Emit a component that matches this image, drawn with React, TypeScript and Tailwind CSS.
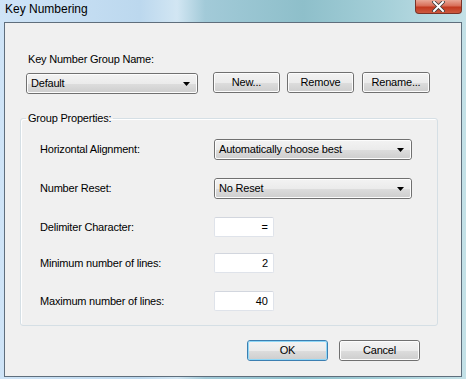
import React from "react";

const font = { fontFamily: '"Liberation Sans", Arial, sans-serif' };

function Btn({ children, w, def }: { children: React.ReactNode; w: string; def?: boolean }) {
  return (
    <div className={`${w} h-[21px] rounded-[3px] border ${def ? "border-[#3c7fb1]" : "border-[#707070]"}`}>
      <div
        className={`h-full w-full rounded-[2px] border ${def ? "border-[#8fd7f7]" : "border-[#fcfcfc]"} bg-[linear-gradient(180deg,#f2f2f2_0%,#ebebeb_50%,#dddddd_51%,#cfcfcf_100%)] flex items-center justify-center text-[11px] leading-[13px] tracking-[-0.2px] text-black`}
      >
        {children}
      </div>
    </div>
  );
}

function Combo({ value, w }: { value: string; w: string }) {
  return (
    <div className={`${w} h-[21px] rounded-[3px] border border-[#707070]`}>
      <div className="h-full w-full rounded-[2px] border border-[#fcfcfc] bg-[linear-gradient(180deg,#f2f2f2_0%,#ebebeb_50%,#dddddd_51%,#cfcfcf_100%)] flex items-center justify-between pl-[3px] pr-[6px] text-[11px] leading-[13px] tracking-[-0.2px] text-black">
        <span>{value}</span>
        <svg width="7" height="4" viewBox="0 0 7 4">
          <path d="M0 0 H7 L3.5 4 Z" fill="#000" />
        </svg>
      </div>
    </div>
  );
}

function TextBox({ value }: { value: string }) {
  return (
    <div className="w-[60px] h-[20px] rounded-[2px] border border-[#dfe3ea] border-t-[#d2d6de] bg-white flex items-center justify-end pr-[5px] text-[11px] leading-[13px] text-black">
      {value}
    </div>
  );
}

function Row({ label, mt, children }: { label: string; mt: string; children: React.ReactNode }) {
  return (
    <div className={`flex items-center ${mt}`}>
      <div className="w-[174px] text-[11px] leading-[13px] tracking-[-0.2px] text-black">{label}</div>
      {children}
    </div>
  );
}

export default function App() {
  return (
    <div
      style={font}
      className="w-[466px] h-[379px] overflow-hidden flex flex-col bg-[linear-gradient(90deg,#cfe4f7_0%,#bcd8ee_30%,#d2e6f3_38%,#a2cad8_44%,#8ebfca_65%,#a4cfd8_82%,#c4e1e7_100%)]"
    >
      {/* Title bar */}
      <div className="h-[22px] flex items-start justify-between pl-[5px] pr-[4px]">
        <div className="pt-[2px] text-[12px] leading-[14px] text-black">Key Numbering</div>
        <div className="w-[47px] h-[14px] rounded-b-[4px] border border-t-0 border-[#7a3328] bg-[linear-gradient(180deg,#e9a796_0%,#d86e58_45%,#c2391f_55%,#cc5a3f_100%)] flex items-center justify-center">
          <svg width="13" height="11" viewBox="0 0 13 11">
            <path d="M2 1 L11 10 M11 1 L2 10" stroke="#3a3a3a" strokeWidth="3.6" strokeLinecap="square" />
            <path d="M2 1 L11 10 M11 1 L2 10" stroke="#ffffff" strokeWidth="2" strokeLinecap="square" />
          </svg>
        </div>
      </div>

      {/* Client */}
      <div className="mx-[4px] h-[355px] border border-[#5f6e7c] bg-[#f0f0f0] flex flex-col">
        <div className="pl-[23px] pt-[30px] text-[11px] leading-[13px] tracking-[-0.2px] text-black">
          Key Number Group Name:
        </div>
        <div className="flex items-start pl-[21px] mt-[6px]">
          <div className="mt-[1px]">
            <Combo value="Default" w="w-[172px]" />
          </div>
          <div className="ml-[15px]">
            <Btn w="w-[67px]">New...</Btn>
          </div>
          <div className="ml-[7px]">
            <Btn w="w-[67px]">Remove</Btn>
          </div>
          <div className="ml-[8px]">
            <Btn w="w-[68px]">Rename...</Btn>
          </div>
        </div>

        <fieldset className="ml-[15px] mt-[17px] w-[418px] rounded-[3px] border border-[#d5dfe5] pb-[14px] shadow-[inset_1px_1px_0_#ffffff]">
          <legend className="ml-[5px] px-[2px] text-[11px] leading-[14px] tracking-[-0.2px] text-black">
            Group Properties:
          </legend>
          <div className="pl-[19px]">
            <Row label="Horizontal Alignment:" mt="mt-[14px]">
              <Combo value="Automatically choose best" w="w-[198px]" />
            </Row>
            <Row label="Number Reset:" mt="mt-[18px]">
              <Combo value="No Reset" w="w-[198px]" />
            </Row>
            <Row label="Delimiter Character:" mt="mt-[18px]">
              <TextBox value="=" />
            </Row>
            <Row label="Minimum number of lines:" mt="mt-[16px]">
              <TextBox value="2" />
            </Row>
            <Row label="Maximum number of lines:" mt="mt-[18px]">
              <TextBox value="40" />
            </Row>
          </div>
        </fieldset>

        <div className="flex pl-[242px] mt-[14px]">
          <Btn w="w-[81px]" def>
            OK
          </Btn>
          <div className="ml-[11px]">
            <Btn w="w-[81px]">Cancel</Btn>
          </div>
        </div>
      </div>
    </div>
  );
}
